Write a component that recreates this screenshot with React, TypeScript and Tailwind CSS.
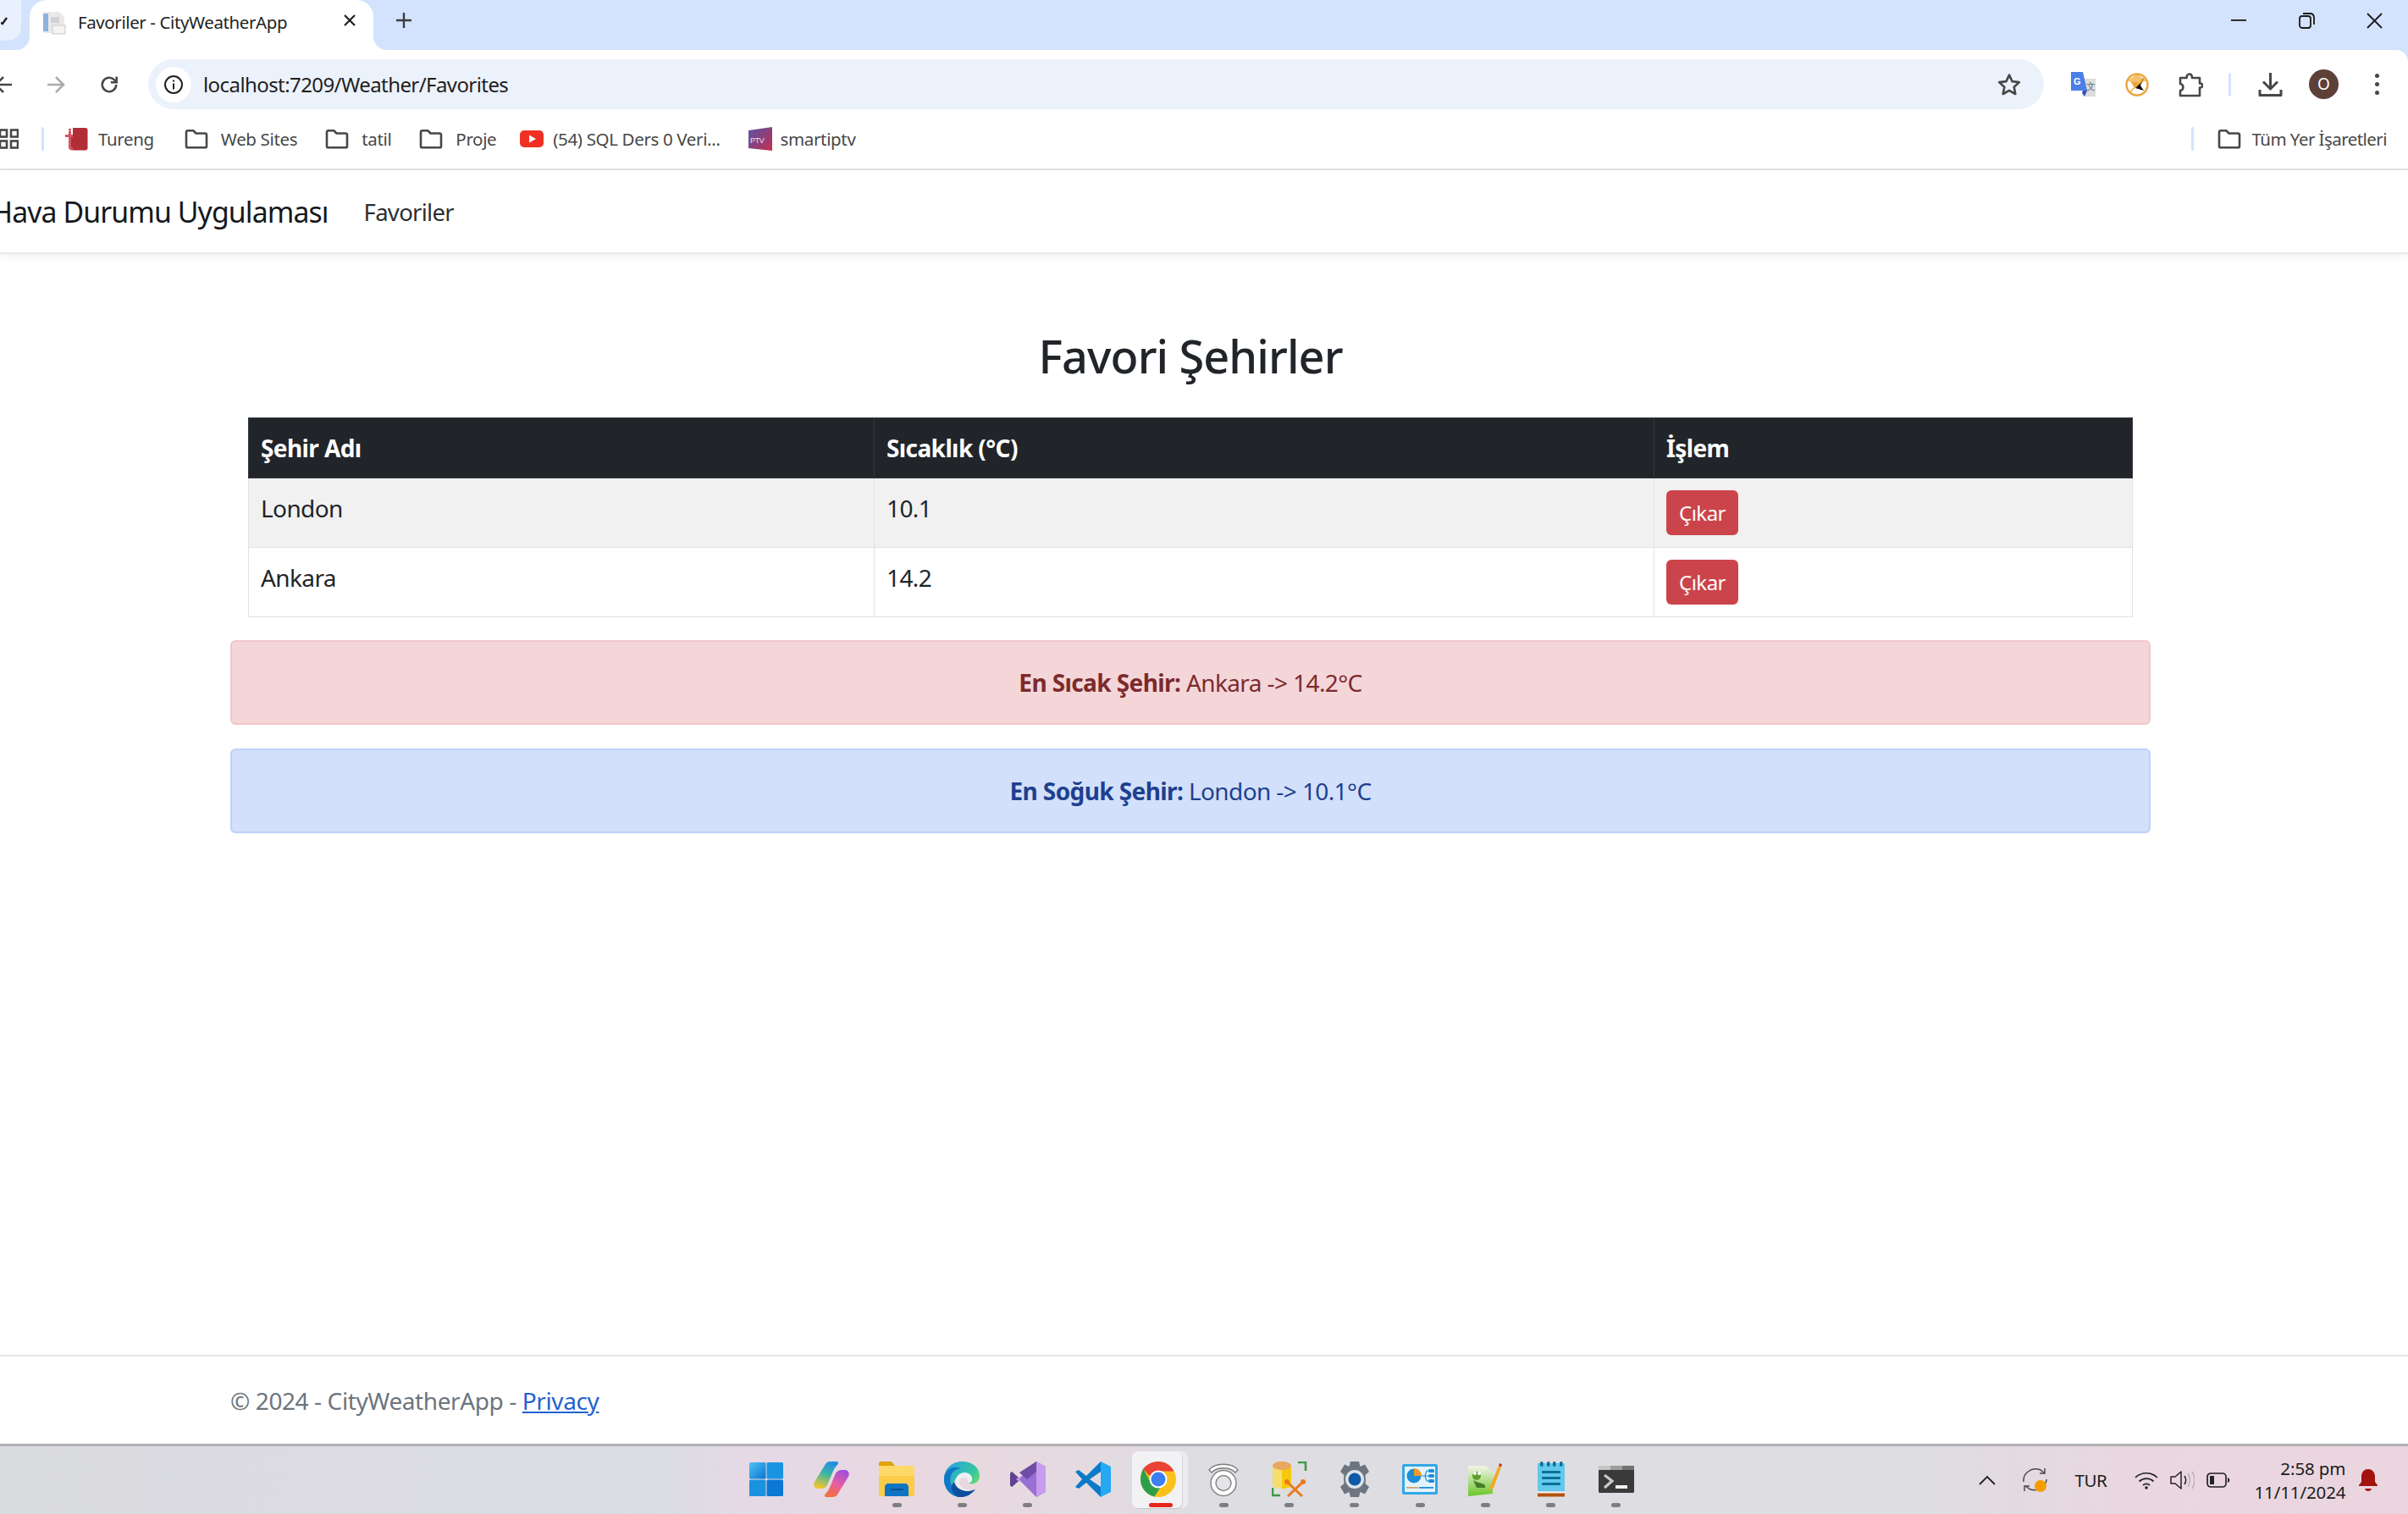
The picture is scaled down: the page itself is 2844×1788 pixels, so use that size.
import type { ReactNode } from 'react';

const SANS = "font-['Noto_Sans','Open_Sans',sans-serif]";

function Folder() {
  return (
    <svg width="28" height="24" viewBox="0 0 28 24" fill="none" stroke="#474747" strokeWidth="2.6" strokeLinejoin="round">
      <path d="M2 4.2c0-1 .8-1.9 1.9-1.9h6.6l3 3.2h10.6c1 0 1.9.8 1.9 1.9v13c0 1-.9 1.9-1.9 1.9H3.900c-1.100 0-1.900-.9-1.900-1.900z" />
    </svg>
  );
}

function TurengIcon() {
  return (
    <svg width="27" height="28" viewBox="0 0 27 28">
      <path d="M9 1h15c1.500 0 2.500 1 2.500 2.500V25c0 1.500-1 2.500-2.500 2.500H10c-2 0-3-1-3-3V9h2z" fill="#b12e36" />
      <path d="M0 9h4V5h3v4h2v3H7v11c0 1 .5 1.500 2 1.500v3c-3 0-5-1-5-4V12H0z" fill="#d8555b" />
      <rect x="4" y="2" width="3" height="2.500" fill="#d8555b" />
    </svg>
  );
}

function YoutubeIcon() {
  return (
    <svg width="28" height="20" viewBox="0 0 28 20">
      <rect width="28" height="20" rx="5" fill="#ee3124" />
      <path d="M11 5.500 19 10l-8 4.500z" fill="#fff" />
    </svg>
  );
}

function SmartTvIcon() {
  return (
    <svg width="28" height="28" viewBox="0 0 28 28">
      <defs>
        <linearGradient id="stv" x1="0" y1="0" x2="1" y2="1">
          <stop offset="0" stopColor="#5a55a8" />
          <stop offset="0.5" stopColor="#8b3f7c" />
          <stop offset="1" stopColor="#c73050" />
        </linearGradient>
      </defs>
      <path d="M0 4 28 0v28L0 25z" fill="url(#stv)" />
      <text x="2" y="19" fontSize="9" fontFamily="Liberation Sans" fill="#e8e8f0">PTV</text>
    </svg>
  );
}

function Bookmark({ icon, label, className }: { icon: ReactNode; label: string; className: string }) {
  return (
    <div className={`flex items-center text-[20.5px] tracking-[-0.35px] ${className}`}>
      {icon}
      <span className="whitespace-nowrap text-[#474747]">{label}</span>
    </div>
  );
}

function BrowserChrome() {
  return (
    <div className="bg-[#d3e3fd]">
      {/* tab strip */}
      <div className="relative flex h-[59px]">
        <div className="flex h-[48px] w-[25px] items-center justify-end rounded-br-[16px] bg-[#eaf1fe] pr-[16px]">
          <svg width="8" height="12" viewBox="0 0 8 12" fill="none" stroke="#1f1f1f" strokeWidth="2.400">
            <path d="M-2 8 2 10 7 3" />
          </svg>
        </div>
        <div className="relative ml-[10px] flex w-[406px] items-center rounded-t-[20px] bg-white pb-[6px] pl-[15px]">
          <span className="absolute -left-[16px] bottom-0 h-[16px] w-[16px] bg-[radial-gradient(circle_at_0_0,#d3e3fd_15.500px,white_16.500px)]" />
          <span className="absolute -right-[16px] bottom-0 h-[16px] w-[16px] bg-[radial-gradient(circle_at_100%_0,#d3e3fd_15.500px,white_16.500px)]" />
          <svg width="28" height="28" viewBox="0 0 28 28" className="shrink-0">
            <path d="M1 1h19l6 6v19H1z" fill="#e9e9ea" />
            <rect x="1" y="3" width="6" height="21" fill="#8cb4dd" />
            <rect x="12" y="17" width="15" height="10" fill="#f4f4f4" stroke="#c9c9c9" />
            <rect x="10" y="7" width="10" height="7" fill="#d2d2d3" />
          </svg>
          <span className="ml-[14px] text-[20.500px] tracking-[-0.4px] whitespace-nowrap text-[#1f1f1f]">Favoriler - CityWeatherApp</span>
          <svg width="14" height="14" viewBox="0 0 14 14" stroke="#1f1f1f" strokeWidth="2.200" className="absolute left-[371px] top-[17px]">
            <path d="M1 1l12 12M13 1 1 13" />
          </svg>
        </div>
        <svg width="18" height="18" viewBox="0 0 18 18" stroke="#3c3c3c" strokeWidth="2.400" className="ml-[27px] mt-[15px]">
          <path d="M9 0v18M0 9h18" />
        </svg>
        <div className="ml-auto flex">
          <div className="flex h-[48px] w-[80px] items-center justify-center">
            <svg width="18" height="2" viewBox="0 0 18 2"><rect width="18" height="1.800" fill="#1a1a1a" /></svg>
          </div>
          <div className="flex h-[48px] w-[80px] items-center justify-center">
            <svg width="19" height="19" viewBox="0 0 19 19" fill="none" stroke="#1a1a1a" strokeWidth="1.800">
              <rect x="1" y="4" width="13" height="14" rx="3" />
              <path d="M5 1h8c3 0 5 2 5 5v8" />
            </svg>
          </div>
          <div className="flex h-[48px] w-[80px] items-center justify-center">
            <svg width="19" height="19" viewBox="0 0 19 19" stroke="#1a1a1a" strokeWidth="1.800">
              <path d="M1 1l17 17M18 1 1 18" />
            </svg>
          </div>
        </div>
      </div>

      <div className="rounded-tr-[14px] bg-white">
        {/* toolbar */}
        <div className="flex h-[82px] items-start pt-[11px]">
          <div className="flex h-[59px] w-[175px] items-center">
            <svg width="21" height="22" viewBox="0 0 21 22" fill="none" stroke="#474747" strokeWidth="2.600" className="-ml-[7px]">
              <path d="M21 11H3M11 2l-9 9 9 9" />
            </svg>
            <svg width="21" height="22" viewBox="0 0 21 22" fill="none" stroke="#acacac" strokeWidth="2.600" className="ml-[42px]">
              <path d="M0 11h18M10 2l9 9-9 9" />
            </svg>
            <svg width="22" height="22" viewBox="0 0 24 24" fill="none" stroke="#474747" strokeWidth="2.800" className="ml-[41px]">
              <path d="M21 12a9 9 0 1 1-2.600-6.400L21 8" />
              <path d="M21.500 1.500v7.500H14" />
            </svg>
          </div>
          <div className="flex h-[59px] w-[2239px] items-center rounded-full bg-[#ecf2fb] pl-[9px]">
            <div className="flex h-[42px] w-[42px] items-center justify-center rounded-full bg-white">
              <svg width="22" height="22" viewBox="0 0 22 22" fill="none" stroke="#1f1f1f" strokeWidth="2">
                <circle cx="11" cy="11" r="10" />
                <path d="M11 9.500v7M11 5.500v2" />
              </svg>
            </div>
            <span className="ml-[14px] text-[24px] tracking-[-0.58px] whitespace-nowrap text-[#1f1f1f]">localhost:7209/Weather/Favorites</span>
            <svg width="28" height="27" viewBox="0 0 28 27" fill="none" stroke="#474747" strokeWidth="2.600" strokeLinejoin="round" className="ml-auto mr-[27px]">
              <path d="m14 2.500 3.500 7.600 8.300 1-6.100 5.700 1.600 8.200L14 20.900 6.700 25l1.600-8.200-6.100-5.700 8.300-1z" />
            </svg>
          </div>
          <div className="flex h-[59px] items-center">
            <div className="ml-[15px] flex w-[63px] justify-center">
              <svg width="29" height="30" viewBox="0 0 29 30">
                <path d="M10 8h19v21H16z" fill="#dcdcdc" />
                <path d="M0 0h14l5 22H0z" fill="#4a80e8" />
                <path d="M14 22h5l-3 7-3-4z" fill="#3b4cc0" />
                <text x="3" y="15" fontSize="11" fontWeight="700" fontFamily="Liberation Sans" fill="#fff">G</text>
                <text x="18" y="21" fontSize="11" fontFamily="Liberation Sans" fill="#5c7080">文</text>
              </svg>
            </div>
            <div className="flex w-[63px] justify-center">
              <svg width="28" height="28" viewBox="0 0 28 28">
                <circle cx="14" cy="14" r="12.500" fill="#fff" stroke="#eaa43a" strokeWidth="2.400" />
                <path d="M3 9 14 1.500 25 9 14 15z" fill="#eea52f" opacity="0.700" />
                <path d="M7 11h9l-5 7z" fill="#eea52f" />
                <path d="M22 6 12 18l10 3-4-6z" fill="#111" />
                <path d="M5 23 22 8" stroke="#eea52f" strokeWidth="1.400" />
              </svg>
            </div>
            <div className="flex w-[63px] justify-center">
              <svg width="29" height="30" viewBox="0 0 29 30" fill="none" stroke="#474747" strokeWidth="2.600" strokeLinejoin="round" className="ml-[2px]">
                <path d="M2 7h7.500c0-6 6.500-6 6.500 0H25v6.500c4.500-.5 4.500 5.500 0 5V28H2v-6c4.500 0 4.500-8 0-8z" />
              </svg>
            </div>
            <div className="ml-[14px] h-[28px] w-[3px] rounded-full bg-[#d3e3fd]" />
            <div className="ml-[15px] flex w-[63px] justify-center">
              <svg width="29" height="30" viewBox="0 0 29 30" fill="none" stroke="#474747" strokeWidth="3">
                <path d="M14.500 1v18M6 11.500l8.500 8.500 8.500-8.500" />
                <path d="M2 21v6.500h25V21" strokeLinejoin="round" />
              </svg>
            </div>
            <div className="flex w-[63px] justify-center">
              <div className="flex h-[35px] w-[35px] items-center justify-center rounded-full bg-[#5d4037] text-[19px] text-white">O</div>
            </div>
            <div className="flex w-[63px] flex-col items-center gap-[4.500px]">
              <span className="h-[5.500px] w-[5.500px] rounded-full bg-[#474747]" />
              <span className="h-[5.500px] w-[5.500px] rounded-full bg-[#474747]" />
              <span className="h-[5.500px] w-[5.500px] rounded-full bg-[#474747]" />
            </div>
          </div>
        </div>

        {/* bookmarks */}
        <div className="flex h-[60px] items-center border-b-2 border-[#e3e3e3] pb-[12px]">
          <svg width="23" height="24" viewBox="0 0 23 24" fill="none" stroke="#474747" strokeWidth="2.600" className="-ml-[1px]">
            <rect x="1" y="1.500" width="8" height="8" />
            <rect x="14" y="1.500" width="8" height="8" />
            <rect x="1" y="14.500" width="8" height="8" />
            <rect x="14" y="14.500" width="8" height="8" />
          </svg>
          <div className="ml-[27px] h-[28px] w-[3px] rounded-full bg-[#d3e3fd]" />
          <Bookmark icon={<TurengIcon />} label="Tureng" className="ml-[25px] gap-[12px]" />
          <Bookmark icon={<Folder />} label="Web Sites" className="ml-[36px] gap-[15px]" />
          <Bookmark icon={<Folder />} label="tatil" className="ml-[33px] gap-[15px]" />
          <Bookmark icon={<Folder />} label="Proje" className="ml-[33px] gap-[15px]" />
          <Bookmark icon={<YoutubeIcon />} label="(54) SQL Ders 0 Veri..." className="ml-[28px] gap-[11px]" />
          <Bookmark icon={<SmartTvIcon />} label="smartiptv" className="ml-[33px] gap-[10px]" />
          <div className="ml-auto h-[28px] w-[3px] rounded-full bg-[#d3e3fd]" />
          <div className="ml-[28px] mr-[25px]">
            <Bookmark icon={<Folder />} label="Tüm Yer İşaretleri" className="gap-[13px] tracking-[-0.55px]" />
          </div>
        </div>
      </div>
    </div>
  );
}

function RemoveButton() {
  return (
    <button className="h-[53px] w-[85px] rounded-[6px] bg-[#cc444b] text-[24px] tracking-[-0.5px] text-white">Çıkar</button>
  );
}

function Row({ city, temp, striped }: { city: string; temp: string; striped?: boolean }) {
  return (
    <tr className={striped ? 'bg-[#f1f1f1]' : 'bg-white'}>
      <td className="border border-[#dfe2e5] p-[14px] align-top leading-[43px]">{city}</td>
      <td className="border border-[#dfe2e5] p-[14px] align-top leading-[43px]">{temp}</td>
      <td className="h-[82px] border border-[#dfe2e5] p-[14px] align-top leading-none">
        <RemoveButton />
      </td>
    </tr>
  );
}

function Alert({ label, text, className }: { label: string; text: string; className: string }) {
  return (
    <div className={`flex h-[100px] items-center justify-center rounded-[6px] border-2 text-[28px] tracking-[-0.6px] ${className}`}>
      <span className="whitespace-pre">
        <strong className="font-bold">{label}</strong> {text}
      </span>
    </div>
  );
}

function Page() {
  return (
    <div className="flex min-h-0 flex-1 flex-col bg-white text-[#212529]">
      <nav className="relative flex h-[99px] shrink-0 items-center border-b-2 border-[#e9e9e9] pt-[2px] shadow-[0_3px_10px_rgba(0,0,0,0.06)]">
        <span className="-ml-[10px] text-[33.800px] tracking-[-0.9px] text-[#15181b]">Hava Durumu Uygulaması</span>
        <span className="ml-[42px] text-[27.500px] tracking-[-0.7px] text-[#2c2f32]">Favoriler</span>
      </nav>
      <main className="flex-1 pl-[272px] pr-[304px] pt-[83px]">
        <h2 className="mb-[36px] text-center text-[54px] leading-[74px] font-medium tracking-[-0.9px]">Favori Şehirler</h2>
        <div className="mx-[21px]">
          <table className="w-[2226px] table-fixed border-collapse text-[28px] tracking-[-0.6px]">
            <thead>
              <tr className="h-[71px] bg-[#212529] text-left text-white">
                <th className="w-[739px] border border-[#33373b] px-[14px] font-bold">Şehir Adı</th>
                <th className="w-[921px] border border-[#33373b] px-[14px] font-bold">Sıcaklık (°C)</th>
                <th className="border border-[#33373b] px-[14px] font-bold">İşlem</th>
              </tr>
            </thead>
            <tbody>
              <Row city="London" temp="10.1" striped />
              <Row city="Ankara" temp="14.2" />
            </tbody>
          </table>
        </div>
        <div className="mt-[27px] flex flex-col gap-[28px]">
          <Alert label="En Sıcak Şehir:" text="Ankara -> 14.2°C" className="border-[#f1c6ca] bg-[#f4d6d9] text-[#7d2a2c]" />
          <Alert label="En Soğuk Şehir:" text="London -> 10.1°C" className="border-[#bcd2f5] bg-[#d2e0fb] text-[#1e408f]" />
        </div>
      </main>
      <footer className="flex h-[105px] shrink-0 items-center border-t-2 border-[#e4e6e8] px-[272px] text-[28px] tracking-[-0.4px] text-[#6c757d]">
        © 2024 - CityWeatherApp -&nbsp;<a className="text-[#1f62d0] underline">Privacy</a>
      </footer>
    </div>
  );
}

function WinIcon() {
  return (
    <svg width="42" height="42" viewBox="0 0 42 42">
      <defs>
        <linearGradient id="w1" x1="0" y1="0" x2="1" y2="1">
          <stop offset="0" stopColor="#4fc3f7" />
          <stop offset="1" stopColor="#0a74d0" />
        </linearGradient>
      </defs>
      <rect x="1" y="1" width="19.500" height="19.500" rx="1.500" fill="url(#w1)" />
      <rect x="21.500" y="1" width="19.500" height="19.500" rx="1.500" fill="#1a94e0" />
      <rect x="1" y="21.500" width="19.500" height="19.500" rx="1.500" fill="#1b92de" />
      <rect x="21.500" y="21.500" width="19.500" height="19.500" rx="1.500" fill="#0a78d4" />
    </svg>
  );
}

function CopilotIcon() {
  return (
    <svg width="42" height="42" viewBox="0 0 42 42">
      <defs>
        <linearGradient id="c1" x1="0.600" y1="0" x2="0.300" y2="1">
          <stop offset="0" stopColor="#1f8fe6" />
          <stop offset="0.450" stopColor="#3fb6a0" />
          <stop offset="1" stopColor="#f4c52e" />
        </linearGradient>
        <linearGradient id="c2" x1="0.700" y1="0" x2="0.300" y2="1">
          <stop offset="0" stopColor="#a24fe0" />
          <stop offset="0.550" stopColor="#e85f9c" />
          <stop offset="1" stopColor="#f2703c" />
        </linearGradient>
      </defs>
      <path d="M14 3C15 1 17 0 20 0H27C29 0 30 2 28 4 23 8 20 20 16 28 14 31 12 32 9 32H5C1 32-1 28 1 24Z" fill="url(#c1)" />
      <path d="M28 39C27 41 25 42 22 42H15C13 42 12 40 14 38 19 34 22 22 26 14 28 11 30 10 33 10H37C41 10 43 14 41 18Z" fill="url(#c2)" />
    </svg>
  );
}

function ExplorerIcon() {
  return (
    <svg width="42" height="42" viewBox="0 0 42 42">
      <path d="M0 2c0-1 1-2 2-2h11c2 0 3 1 4 3l3 3H0z" fill="#e0a200" />
      <path d="M0 5h40c1 0 2 1 2 2v32c0 1-1 2-2 2H2c-1 0-2-1-2-2z" fill="#fbcb4a" />
      <path d="M0 5h40c1 0 2 1 2 2v10H0z" fill="#ffd968" />
      <path d="M7 41V30c0-2 2-4 4-4h20c2 0 4 2 4 4v11z" fill="#0f74c4" />
      <rect x="14" y="32" width="15" height="2" rx="1" fill="#0a4f8c" />
    </svg>
  );
}

function EdgeIcon() {
  return (
    <svg width="42" height="42" viewBox="0 0 42 42">
      <defs>
        <linearGradient id="e1" x1="0.200" y1="0" x2="1" y2="0.700">
          <stop offset="0" stopColor="#2aa6d8" />
          <stop offset="0.600" stopColor="#33c6a4" />
          <stop offset="1" stopColor="#7ce05e" />
        </linearGradient>
      </defs>
      <path d="M21 0C9 0 0 9 0 21c0 12 9 21 19 21C9 34 9 20 20 15c5-2 11 0 13 5 1 3-1 5-4 5 3 3 13 1 13-8C42 7 33 0 21 0z" fill="url(#e1)" />
      <path d="M0 21C0 10 10 4 20 8c-11 1-15 11-11 20 3 7 11 12 20 11-3 2-6 3-9 3C9 42 0 33 0 21z" fill="#0f78c8" />
      <path d="M12 24c2 9 12 13 25 9-4 5-10 9-17 9-2 0-4 0-5-1-7-4-8-12-3-17z" fill="#0d4f9c" />
      <path d="M14 25c-1-7 4-12 10-12 5 0 9 3 9 7 0 3-2 5-5 5 1-3-1-6-5-6-3 0-6 3-5 7 1 5 7 8 15 8-8 3-17-1-19-9z" fill="#eef0f4" />
    </svg>
  );
}

function VsIcon() {
  return (
    <svg width="42" height="42" viewBox="0 0 42 42">
      <path d="M31 0l11 6v30l-11 6-20-20L2 30l-2-2V14l2-2 9 8z" fill="#9a6fd3" />
      <path d="M31 0l11 6v30l-11 6z" fill="#c79cf0" />
      <path d="M31 0v12l-11 9-9-8z" fill="#6f4ca6" />
      <path d="M2 12 11 20v2l-9 8-2-2V14z" fill="#5f4391" />
      <path d="M7 21l4-3v6z" fill="#c79cf0" />
    </svg>
  );
}

function VsCodeIcon() {
  return (
    <svg width="42" height="42" viewBox="0 0 42 42">
      <path d="M30 0l12 6v30l-12 6V0z" fill="#24a9f2" />
      <path d="M30 0 13 17 4 10 0 12l8 9-8 9 4 2 9-7 17 17V30L17 21 30 12z" fill="#0b7ac8" />
    </svg>
  );
}

function ChromeIcon() {
  return (
    <svg width="42" height="42" viewBox="0 0 42 42">
      <circle cx="21" cy="21" r="21" fill="#fbc11a" />
      <path d="M21 0c8 0 15 4.500 18.500 11.500H21a9.500 9.500 0 0 0-9 6.500L3 9C7 3.500 13.500 0 21 0z" fill="#e94335" />
      <path d="M3 8.500 12.500 25.500a9.500 9.500 0 0 0 11 5L16.500 41.500C7 39.500 0 31 0 21 0 16 1.500 12 3 8.500z" fill="#2f9e48" />
      <circle cx="21" cy="21" r="10.500" fill="#fff" />
      <circle cx="21" cy="21" r="8.500" fill="#3b7ff0" />
    </svg>
  );
}

function RingsIcon() {
  return (
    <svg width="36" height="42" viewBox="0 0 36 42" fill="none">
      <path d="M1 10C8 1 28 1 35 10l-3 3C25 6 11 6 4 13z" fill="#fff" stroke="#7c7c7e" strokeWidth="1.400" />
      <circle cx="18" cy="25.500" r="15" fill="#fff" stroke="#808082" strokeWidth="1.400" />
      <circle cx="18" cy="25.500" r="9" fill="#e4e4e8" stroke="#808082" strokeWidth="1.400" />
    </svg>
  );
}

function DbToolIcon() {
  return (
    <svg width="42" height="42" viewBox="0 0 42 42">
      <path d="M1 5v22c0 3 5 5 11 5s11-2 11-5V5z" fill="#f6de6a" />
      <path d="M12 8c6 0 11-1 11-3v22c0 3-5 5-11 5z" fill="#f6c90e" />
      <ellipse cx="12" cy="5" rx="11" ry="5" fill="#e8a860" />
      <path d="M31 1h9v10M1 31v9h9" fill="none" stroke="#3f9a46" strokeWidth="2.600" />
      <path d="M18 24 36 41M37 24 19 41" stroke="#ea7a1e" strokeWidth="3" />
      <circle cx="18" cy="24" r="3" fill="#ea7a1e" />
      <circle cx="37" cy="24" r="3" fill="#ea7a1e" />
    </svg>
  );
}

function GearIcon() {
  return (
    <svg width="42" height="42" viewBox="0 0 42 42">
      <path d="M16 0h10l1.500 6 5.500-2.500 5 8.500-4.500 4c.6 3 .6 7 0 10l4.500 4-5 8.500-5.500-2.500L26 42H16l-1.500-6L9 38.500 4 30l4.500-4c-.6-3-.6-7 0-10L4 12l5-8.500L14.500 6z" fill="#6d7680" />
      <circle cx="21" cy="21" r="11" fill="#dfe3e8" />
      <circle cx="21" cy="21" r="7.500" fill="#0f5aa8" />
    </svg>
  );
}

function PanelIcon() {
  return (
    <svg width="42" height="36" viewBox="0 0 42 36">
      <rect width="42" height="36" rx="2" fill="#32a8e4" />
      <rect x="3" y="3" width="36" height="30" fill="#e3f3fc" />
      <circle cx="14" cy="14" r="8.500" fill="#1f8ed8" />
      <path d="M14 14V5a9 9 0 0 1 9 9z" fill="#ef9a28" />
      <path d="M23 14h4l2-6h2M27 14h4M27 14l2 6h2" fill="none" stroke="#1f8ed8" strokeWidth="1.200" />
      <rect x="31" y="6" width="7" height="4" rx="1.500" fill="#1f8ed8" />
      <rect x="31" y="12" width="7" height="4" rx="1.500" fill="#1f8ed8" />
      <rect x="31" y="18" width="7" height="4" rx="1.500" fill="#1f8ed8" />
      <rect x="5" y="27" width="14" height="1.800" fill="#d9a066" />
      <rect x="20" y="27" width="17" height="1.800" fill="#1f8ed8" />
    </svg>
  );
}

function NotepadPlusIcon() {
  return (
    <svg width="42" height="42" viewBox="0 0 42 42">
      <defs>
        <linearGradient id="n1" x1="0" y1="0" x2="0" y2="1">
          <stop offset="0" stopColor="#f4f4ea" />
          <stop offset="1" stopColor="#6cc628" />
        </linearGradient>
      </defs>
      <path d="M1 5h21l8 8v25L1 41z" fill="url(#n1)" />
      <circle cx="11" cy="17" r="5" fill="#5e9f2c" />
      <circle cx="9" cy="14" r="2" fill="#fff" />
      <circle cx="14" cy="14" r="2" fill="#fff" />
      <path d="M7 22c4 3 10 3 14 6v3H11z" fill="#477a24" />
      <path d="M27 29 37 5l3 1.500L31 31l-5 4z" fill="#efa924" />
      <path d="M37 5l1-3 3 1.500-1 3z" fill="#c0392b" />
    </svg>
  );
}

function NotepadIcon() {
  return (
    <svg width="32" height="42" viewBox="0 0 32 42">
      <rect y="2" width="32" height="33" rx="1" fill="#63c8ec" />
      <g fill="#0a6f98">
        <rect x="3" y="0" width="3.500" height="6" rx="1.700" />
        <rect x="11" y="0" width="3.500" height="6" rx="1.700" />
        <rect x="18" y="0" width="3.500" height="6" rx="1.700" />
        <rect x="26" y="0" width="3.500" height="6" rx="1.700" />
        <rect x="5" y="11" width="22" height="3" rx="1" />
        <rect x="5" y="18" width="22" height="3" rx="1" />
        <rect x="5" y="25" width="22" height="3" rx="1" />
      </g>
      <rect y="36" width="32" height="1.500" fill="#f3f3f3" />
      <rect y="37.500" width="32" height="4" fill="#b0530e" />
    </svg>
  );
}

function TerminalIcon() {
  return (
    <svg width="42" height="32" viewBox="0 0 42 32">
      <rect width="42" height="32" rx="1.500" fill="#3a3a3a" />
      <rect width="14" height="5" fill="#c4c4c4" />
      <rect x="14" width="14" height="5" fill="#9c9c9c" />
      <rect x="28" width="14" height="5" fill="#727272" />
      <path d="M7 11l9 7-9 8" fill="none" stroke="#c9c9c9" strokeWidth="3.200" />
      <rect x="20" y="23" width="14" height="4" fill="#f0f0f0" />
    </svg>
  );
}

const taskbarApps: { icon: ReactNode; running?: boolean; active?: boolean }[] = [
  { icon: <WinIcon /> },
  { icon: <CopilotIcon /> },
  { icon: <ExplorerIcon />, running: true },
  { icon: <EdgeIcon />, running: true },
  { icon: <VsIcon />, running: true },
  { icon: <VsCodeIcon /> },
  { icon: <ChromeIcon />, active: true },
  { icon: <RingsIcon />, running: true },
  { icon: <DbToolIcon />, running: true },
  { icon: <GearIcon />, running: true },
  { icon: <PanelIcon />, running: true },
  { icon: <NotepadPlusIcon />, running: true },
  { icon: <NotepadIcon />, running: true },
  { icon: <TerminalIcon />, running: true },
];

function Taskbar() {
  return (
    <div className="flex h-[83px] shrink-0 items-center border-t-[3px] border-[#b1afb3] bg-[linear-gradient(90deg,#dadbdf_0%,#dcdce4_28%,#e5d9e6_31%,#e9d8df_40%,#dedde2_50%,#dedde2_80%,#e9d7e0_88%,#ebd5df_100%)] pl-[866px]">
      {taskbarApps.map((app, i) => (
        <div key={i} className="relative flex h-[80px] w-[77.250px] items-center justify-center pb-[3px]">
          {app.active && (
            <>
              <span className="absolute left-[7px] top-[6px] h-[67px] w-[66px] rounded-[7px] bg-[#ececef]" />
              <span className="absolute left-[7px] top-[6px] h-[67px] w-[59px] rounded-[7px] bg-[#f2f1f4] shadow-[1px_1px_1px_rgba(0,0,0,0.1)]" />
              <span className="absolute bottom-[8px] left-[27px] h-[5px] w-[28px] rounded-full bg-[#e8231a]" />
            </>
          )}
          <span className="relative flex">{app.icon}</span>
          {app.running && <span className="absolute bottom-[8px] left-[33px] h-[5px] w-[11px] rounded-full bg-[#7f7d80]" />}
        </div>
      ))}
      <div className="ml-[389px] flex items-center text-[#1c1c1c]">
        <svg width="20" height="12" viewBox="0 0 20 12" fill="none" stroke="#222" strokeWidth="1.800">
          <path d="M1 11l9-9 9 9" />
        </svg>
        <svg width="29" height="30" viewBox="0 0 29 30" fill="none" stroke="#4a4a4a" strokeWidth="1.500" className="relative ml-[32px]">
          <path d="M1 17C0 7 10-1 21 3l5 4M26 1v6h-6M28 14c0 8-10 15-19 12l-6-4M2 28v-6h6" />
          <circle cx="21" cy="22" r="7" fill="#f59c00" stroke="none" />
        </svg>
        <span className="ml-[33px] text-[20.500px] tracking-[-0.4px]">TUR</span>
        <svg width="28" height="21" viewBox="0 0 28 21" fill="none" stroke="#222" strokeWidth="1.700" className="ml-[33px]">
          <path d="M1 7c7-7 19-7 26 0M5.500 11.500c5-4.500 12-4.500 17 0M10 16c2.500-2 5.500-2 8 0" />
          <circle cx="14" cy="19" r="1.800" fill="#222" stroke="none" />
        </svg>
        <svg width="29" height="24" viewBox="0 0 29 24" fill="none" stroke="#222" strokeWidth="1.500" className="ml-[14px]">
          <path d="M1 8v8h5l7 6V2L6 8z" strokeLinejoin="round" />
          <path d="M17 7c2 3 2 7 0 10" />
          <path d="M21 4c3 5 3 11 0 16M26 2c4 6 4 14 0 20" stroke="#b5b3b6" />
        </svg>
        <svg width="28" height="18" viewBox="0 0 28 18" fill="none" stroke="#222" strokeWidth="1.700" className="ml-[14px]">
          <rect x="1" y="1" width="22" height="16" rx="4" />
          <rect x="4" y="4" width="5" height="10" fill="#222" stroke="none" />
          <path d="M25 6c3 1 3 5 0 6z" fill="#222" stroke="none" />
        </svg>
        <div className="ml-[14px] flex w-[122px] flex-col items-end text-[20.500px] leading-[28px] tracking-[-0.1px]">
          <span>2:58 pm</span>
          <span>11/11/2024</span>
        </div>
        <svg width="24" height="28" viewBox="0 0 24 28" className="ml-[15px]">
          <path d="M12 1c5 0 8 4 8 9v6l3 4v1H1v-1l3-4v-6c0-5 3-9 8-9z" fill="#a2120f" />
          <path d="M8 24h8c-1 4-7 4-8 0z" fill="#a2120f" />
        </svg>
      </div>
    </div>
  );
}

export default function App() {
  return (
    <div className={`flex h-[1788px] w-[2844px] flex-col overflow-hidden ${SANS}`}>
      <BrowserChrome />
      <Page />
      <Taskbar />
    </div>
  );
}
